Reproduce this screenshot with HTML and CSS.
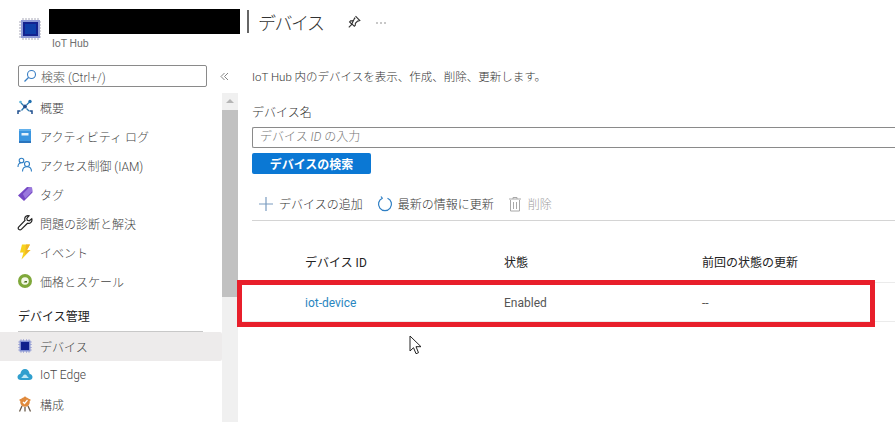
FILE: index.html
```html
<!DOCTYPE html>
<html lang="ja">
<head>
<meta charset="utf-8">
<title>デバイス</title>
<link rel="stylesheet" href="styles.css">
</head>
<body>
<div class="page">
  <header class="top">
    <svg class="hub-icon" viewBox="0 0 24 24" width="24" height="24">
      <g stroke="#a9a9b8" stroke-width="1"><path d="M5 1v22M8 1v22M11 1v22M14 1v22M17 1v22M20 1v22M1 5h22M1 8h22M1 11h22M1 14h22M1 17h22M1 20h22"/></g>
      <rect x="3" y="3" width="19" height="18" fill="#8f9bd6"/>
      <rect x="5" y="5" width="15" height="14" fill="#14238f"/>
      <rect x="7" y="7" width="11" height="10" fill="#0f3fa8"/>
    </svg>
    <div class="top-names">
      <div class="redacted"></div>
      <div class="res-type">IoT Hub</div>
    </div>
    <h1 class="title"><span class="title-bar"></span>デバイス</h1>
    <svg class="pin" viewBox="0 0 14 14" width="14" height="14"><path d="M8.500 1.200l4.300 4.300-1.200.5-1 .1-2.200 2.200-.1 2-1 1-2.200-2.200-3.300 3.300M4.800 9.100L2.600 6.900l1-1 2-.1 2.200-2.200.1-1z" fill="none" stroke="#333" stroke-width="1.100"/></svg>
    <svg class="more" viewBox="0 0 10 2" width="10" height="2"><circle cx="1" cy="1" r=".7" fill="#666"/><circle cx="5" cy="1" r=".7" fill="#666"/><circle cx="9" cy="1" r=".7" fill="#666"/></svg>
  </header>
  <div class="body">
    <aside class="side">
      <div class="search-row">
        <div class="search">
          <svg viewBox="0 0 14 14" width="14" height="14"><circle cx="8.500" cy="5.500" r="4" fill="none" stroke="#3a7fc4" stroke-width="1.100"/><path d="M5.500 8.500L1.500 12.500" stroke="#3a7fc4" stroke-width="1.200"/></svg>
          <span>検索 (Ctrl+/)</span>
        </div>
        <svg class="collapse" viewBox="0 0 9 9" width="9" height="9"><path d="M4.500 1L1 4.500 4.500 8M8 1L4.500 4.500 8 8" fill="none" stroke="#777" stroke-width=".9"/></svg>
      </div>
      <div class="side-scroll">
        <nav class="menu">
          <a class="item"><svg viewBox="0 0 16 16" width="16" height="16"><path d="M4.500 11.500L7 8.500M9.500 6L12 3.500M4 4l2.500 2.500M9.500 9.500L12 12" stroke="#2a7ab0" stroke-width="1.300"/><circle cx="8" cy="7.500" r="2" fill="#1f4f8e"/><circle cx="13" cy="2.500" r="1.700" fill="#1f6fb0"/><circle cx="3.500" cy="3" r="1.300" fill="#59b4d9"/><path d="M1 15v-3h2.500M15 15v-3h-2.500" stroke="#1f4f8e" stroke-width="1.500" fill="none"/></svg>概要</a>
          <a class="item"><svg viewBox="0 0 16 16" width="16" height="16"><rect x="2" y="1" width="12" height="14" rx="1" fill="#3b96e0"/><rect x="2" y="1" width="12" height="2" fill="#63b1ec"/><rect x="2" y="13" width="12" height="2" fill="#2a74bd"/><rect x="4.500" y="5" width="7" height="2.500" fill="#e6f2fb"/></svg>アクティビティ ログ</a>
          <a class="item"><svg viewBox="0 0 16 16" width="16" height="16"><g fill="none" stroke="#2f7fc4" stroke-width="1.100"><circle cx="4.500" cy="3.500" r="2.300"/><path d="M1 10c0-3 1.500-4.300 3.500-4.300"/><circle cx="10" cy="7" r="2.500"/><path d="M5.500 14.500c0-3 2-4.800 4.500-4.800s4.500 1.800 4.500 4.800"/></g></svg>アクセス制御 (IAM)</a>
          <a class="item"><svg viewBox="0 0 16 16" width="16" height="16"><path d="M10 1l5 .5.500 5-8.500 8.500-6-5.500z" fill="#7447c4"/><path d="M12 1.500l3 .2.300 3.500-7 7.300-2.500-4.500z" fill="#9a78dd"/></svg>タグ</a>
          <a class="item"><svg viewBox="0 0 16 16" width="16" height="16"><path d="M14.800 3.800l-2.500 2-2-.6-.5-1.900 2.200-2.500c-2.200-.6-4.300 1-4.300 3.100 0 .6 0 1 .3 1.500L1.800 11.800c-.9.900-.7 2 0 2.600.8.700 1.800.7 2.500 0l6.200-6.100c2.700.8 5.100-1.800 4.300-4.500z" fill="#fff" stroke="#222" stroke-width="1.200"/></svg>問題の診断と解決</a>
          <a class="item"><svg viewBox="0 0 16 16" width="16" height="16"><path d="M5 .5h8L10 6h3.500L4.500 15.500 6.500 8.500H3z" fill="#f7d21e"/><path d="M9 .5h4L10 6h3.500L8 10.500z" fill="#f0b428"/></svg>イベント</a>
          <a class="item"><svg viewBox="0 0 16 16" width="16" height="16"><circle cx="8" cy="8" r="7" fill="#7fa83a"/><circle cx="8" cy="8" r="3.800" fill="#f3f8e8"/><path d="M6.500 9.500h3.500v-1.500h-2z" fill="#4d6b1e"/></svg>価格とスケール</a>
          <div class="section">デバイス管理</div>
          <a class="item active"><svg viewBox="0 0 16 16" width="16" height="16"><g stroke="#a3a7d6" stroke-width=".8"><path d="M4 1v14M6.500 1v14M9.500 1v14M12 1v14M1 4h14M1 6.500h14M1 9.500h14M1 12h14"/></g><rect x="2.500" y="2.500" width="11" height="11" fill="#7f8dd2"/><rect x="4" y="4" width="8" height="8" fill="#10208c"/></svg>デバイス</a>
          <a class="item"><svg viewBox="0 0 16 16" width="16" height="16"><path d="M4 13C1.700 13 .5 11.700.5 10c0-1.700 1.200-2.900 2.800-3.100C3.700 4 5.700 2 8 2s4.300 2 4.700 4.900c1.600.2 2.800 1.400 2.800 3.100 0 1.700-1.200 3-3.500 3z" fill="#2f9fce"/><path d="M6 9.500c0-1.200.9-2 2-2s2 .8 2 2c.8 0 1.500.5 1.500 1.500h-7C4.500 10 5.200 9.500 6 9.500z" fill="#bfe8f6"/></svg>IoT Edge</a>
          <a class="item"><svg viewBox="0 0 16 16" width="16" height="16"><circle cx="8" cy="6" r="4.800" fill="#e08a3c"/><circle cx="8" cy="1.500" r="1.100" fill="#e08a3c"/><circle cx="3.500" cy="4" r="1.100" fill="#e08a3c"/><circle cx="12.500" cy="4" r="1.100" fill="#e08a3c"/><path d="M6 6l1.500 1.500 3-3.500" stroke="#fff" stroke-width="1.200" fill="none"/><path d="M5 10L2.500 15.500M11 10l2.500 5.500M8 11v4.500" stroke="#6a5a4a" stroke-width="1.300"/></svg>構成</a>
        </nav>
        <div class="scrollbar">
          <div class="arrow"></div>
          <div class="thumb"></div>
        </div>
      </div>
    </aside>
    <main class="main">
      <p class="intro">IoT Hub 内のデバイスを表示、作成、削除、更新します。</p>
      <label class="field-label">デバイス名</label>
      <div class="input">デバイス <i>ID</i> の入力</div>
      <button class="primary">デバイスの検索</button>
      <div class="toolbar">
        <span class="tool"><svg viewBox="0 0 16 16" width="16" height="16"><path d="M8 1v14M1 8h14" stroke="#7a9cc0" stroke-width="1.200"/></svg>デバイスの追加</span>
        <span class="tool"><svg viewBox="0 0 16 16" width="16" height="16"><path d="M5.500 2.200A6.500 6.500 0 1 0 10.500 2.200" fill="none" stroke="#2f7fc4" stroke-width="1.200"/><path d="M5.500 2.500L4 .5" stroke="#2f7fc4" stroke-width="1.200"/></svg>最新の情報に更新</span>
        <span class="tool disabled"><svg viewBox="0 0 16 16" width="16" height="16"><path d="M3.500 4v11h9V4M2 3h12M6 3V1.500h4V3M6.500 6v7M9.500 6v7" fill="none" stroke="#a8a8a8" stroke-width="1"/></svg>削除</span>
      </div>
      <div class="table">
        <div class="tr th"><span>デバイス ID</span><span>状態</span><span>前回の状態の更新</span></div>
        <div class="tr td"><a class="link">iot-device</a><span>Enabled</span><span>--</span></div>
      </div>
    </main>
  </div>
  <div class="callout"></div>
  <svg class="cursor" viewBox="0 0 14 20" width="14" height="20"><path d="M1 1v15l3.500-3.300 2.500 6 2.500-1-2.500-6H12z" fill="#fff" stroke="#222" stroke-width="1"/></svg>
</div>
</body>
</html>
```
FILE: styles.css
```css
* { box-sizing: border-box; }
html, body { margin: 0; background: #fff; }
.page {
  position: relative;
  width: 895px;
  height: 422px;
  overflow: hidden;
  font-family: Roboto, "Noto Sans CJK JP", sans-serif;
  font-size: 12px;
  font-weight: 300;
  color: #505050;
}
.top { height: 65px; display: flex; align-items: flex-start; padding: 9px 0 0 18px; }
.hub-icon { margin-top: 8px; flex: none; }
.top-names { margin-left: 7px; width: 191px; flex: none; }
.redacted { height: 25px; background: #000; }
.res-type { margin: 2px 0 0 3px; font-size: 10.500px; line-height: 15px; color: #707070; font-weight: 400; }
.title { display: flex; align-items: center; margin: 0 0 0 7px; height: 25px; font-size: 18px; font-weight: 300; color: #333; white-space: nowrap; letter-spacing: -1.500px; }
.title-bar { width: 2px; height: 23px; background: #666; margin: 0 9px 0 0; }
.pin { margin: 6px 0 0 24px; }
.more { margin: 13px 0 0 15px; }
.body { display: flex; height: 357px; }
.side { width: 238px; flex: none; display: flex; flex-direction: column; }
.search-row { display: flex; align-items: center; height: 22px; padding-left: 18px; }
.search { width: 189px; height: 22px; border: 1px solid #8a8a8a; border-radius: 2px; display: flex; align-items: center; gap: 4px; padding-left: 4px; color: #555; }
.collapse { margin-left: 13px; }
.side-scroll { display: flex; margin-top: 6px; flex: 1; min-height: 0; }
.menu { width: 222px; flex: none; display: flex; flex-direction: column; }
.item { height: 29px; flex: none; display: flex; align-items: center; gap: 7px; padding: 0 0 1px 17px; color: #444; white-space: nowrap; }
.item.active { background: #edebeb; border-radius: 0 2px 2px 0; }
.section { height: 36px; flex: none; margin: 0 19px 0 18px; padding-top: 13px; line-height: 16px; color: #222; font-weight: 400; border-bottom: 1px solid #c8c8c8; }
.scrollbar { width: 16px; background: #f0f0f0; display: flex; flex-direction: column; }
.arrow { height: 17px; flex: none; position: relative; }
.arrow::after { content: ""; position: absolute; left: 4px; top: 6px; border: 4px solid transparent; border-top: 0; border-bottom: 4px solid #b5b5b5; }
.thumb { height: 187px; background: #c1c1c1; }
.main { flex: 1; padding-left: 14px; min-width: 0; }
.intro { margin: 1px 0 17px; line-height: 22px; color: #333; font-size: 11.500px; }
.field-label { display: block; line-height: 16px; margin-bottom: 6px; color: #333; }
.input { height: 21px; border: 1px solid #8a8a8a; border-radius: 2px 0 0 2px; border-right: 0; padding-left: 7px; line-height: 19px; color: #777; }
.primary { display: block; width: 119px; height: 21px; margin-top: 5px; padding: 0; border: 0; border-radius: 2px; background: #0b78d4; color: #fff; font: 700 12px Roboto, "Noto Sans CJK JP", sans-serif; }
.toolbar { height: 47px; padding-top: 13px; display: flex; align-items: center; gap: 14px; border-bottom: 1px solid #d4d4d4; }
.tool { display: flex; align-items: center; gap: 5px; padding-left: 6px; color: #333; white-space: nowrap; }
.tool + .tool { padding-left: 0; }
.tool.disabled { color: #a0a0a0; padding-left: 0; gap: 5px; margin-left: -1px; }
.table { margin: 20px 0 0 -14px; }
.tr { display: grid; grid-template-columns: 67px 199px 198px 1fr; border-bottom: 1px solid #ebebeb; align-items: center; }
.tr::before { content: ""; }
.th { height: 42px; color: #222; font-weight: 400; }
.td { height: 39px; padding-top: 2px; color: #555; font-weight: 400; }
.link { color: #2a86c0; }
.callout { position: absolute; left: 237px; top: 280px; width: 638px; height: 47px; border: 5px solid #e81f2b; }
.cursor { position: absolute; left: 409px; top: 335px; }
```
